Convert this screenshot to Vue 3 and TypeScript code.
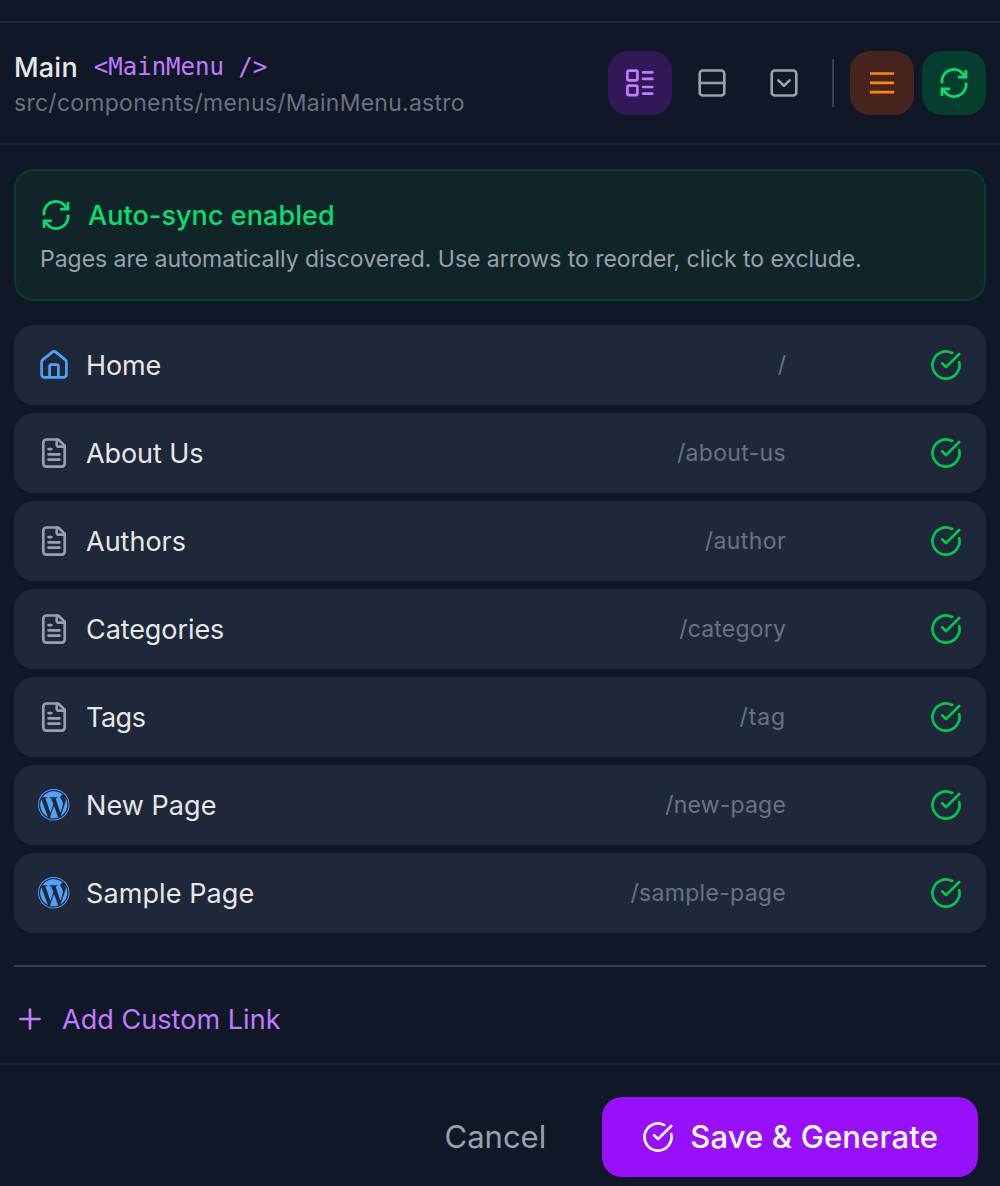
<script setup lang="ts">
import { defineComponent, h } from 'vue'

type IconName = 'grid' | 'rows' | 'dropdown' | 'lines' | 'sync' | 'home' | 'file' | 'wordpress' | 'check' | 'plus'

interface Shape {
  d: string
  fill?: boolean
  cap?: 'round' | 'butt'
}

const box = 'M6.7 3.5h18.6a3 3 0 0 1 3 3v19a3 3 0 0 1-3 3H6.7a3 3 0 0 1-3-3v-19a3 3 0 0 1 3-3z'

const icons: Record<IconName, Shape[]> = {
  grid: [
    { d: 'M4.7 3.6h7.4a1.3 1.3 0 0 1 1.3 1.3v7.2a1.3 1.3 0 0 1-1.3 1.3H4.7a1.3 1.3 0 0 1-1.3-1.3V4.9a1.3 1.3 0 0 1 1.3-1.3z' },
    { d: 'M4.7 18.6h7.4a1.3 1.3 0 0 1 1.3 1.3v6.9a1.3 1.3 0 0 1-1.3 1.3H4.7a1.3 1.3 0 0 1-1.3-1.3v-6.9a1.3 1.3 0 0 1 1.3-1.3z' },
    { d: 'M19 5.3h9.3M19 11.9h9.3M19 20h9.3M19 26.6h9.3' },
  ],
  rows: [{ d: box }, { d: 'M3.7 16h24.6' }],
  dropdown: [{ d: box }, { d: 'M10.4 13.4l5.6 5.3 5.6-5.3' }],
  lines: [{ d: 'M4 6.5h24M4 15.9h24M4 25.2h24', cap: 'butt' }],
  sync: [
    { d: 'M4 16.4A12 12 0 0 1 27.2 10.6M28 15.6A12 12 0 0 1 4.8 21.4', cap: 'butt' },
    { d: 'M28 3v7.2h-8M4 29v-7.2h8', cap: 'butt' },
  ],
  home: [
    { d: 'M3.6 13.4c0-1.2.4-2 1.3-2.8l9.3-7.5c1.1-.9 2.5-.9 3.6 0l9.3 7.5c.9.8 1.3 1.6 1.3 2.8v12a3 3 0 0 1-3 3H6.6a3 3 0 0 1-3-3z' },
    { d: 'M11.6 28V17.7a2 2 0 0 1 2-2h4.8a2 2 0 0 1 2 2V28' },
  ],
  file: [
    { d: 'M8.3 2.5h11.9l6.5 6.3v17.8a3 3 0 0 1-3 3H8.3a3 3 0 0 1-3-3V5.5a3 3 0 0 1 3-3z' },
    { d: 'M18.7 2.8v4.8a2 2 0 0 0 2 2h5.8' },
    { d: 'M10.5 12.1h2.8M10.5 17.3h11M10.5 22.6h11' },
  ],
  wordpress: [
    { d: 'M8.708 61.26c0 20.802 12.089 38.779 29.619 47.298L13.258 39.872a52.354 52.354 0 0 0-4.55 21.388z', fill: true },
    { d: 'M96.74 58.608c0-6.495-2.333-10.993-4.334-14.494-2.664-4.329-5.161-7.995-5.161-12.324 0-4.831 3.664-9.328 8.825-9.328.233 0 .454.029.681.042-9.35-8.566-21.807-13.796-35.489-13.796-18.36 0-34.513 9.42-43.91 23.688 1.233.037 2.395.063 3.382.063 5.497 0 14.006-.667 14.006-.667 2.833-.167 3.167 3.994.337 4.329 0 0-2.847.335-6.015.501L48.2 93.547l11.501-34.493-8.188-22.434c-2.83-.166-5.511-.501-5.511-.501-2.832-.166-2.5-4.496.332-4.329 0 0 8.679.667 13.843.667 5.496 0 14.006-.667 14.006-.667 2.835-.167 3.168 3.994.337 4.329 0 0-2.853.335-6.015.501l18.992 56.494 5.242-17.517c2.272-7.269 4.001-12.49 4.001-16.989z', fill: true },
    { d: 'M62.184 65.857l-15.768 45.819a52.552 52.552 0 0 0 14.846 2.141c6.12 0 11.989-1.058 17.452-2.979a4.451 4.451 0 0 1-.374-.724L62.184 65.857z', fill: true },
    { d: 'M107.376 36.046c.226 1.674.354 3.471.354 5.404 0 5.333-.996 11.328-3.996 18.824l-16.053 46.413c15.624-9.111 26.133-26.038 26.133-45.426.001-9.137-2.333-17.729-6.438-25.215z', fill: true },
    { d: 'M61.262 0C27.483 0 0 27.481 0 61.26c0 33.783 27.483 61.263 61.262 61.263 33.778 0 61.265-27.48 61.265-61.263C122.526 27.481 95.04 0 61.262 0zm0 119c-31.9 0-57.74-25.84-57.74-57.74S29.36 3.52 61.262 3.52 119 29.36 119 61.26 93.16 119 61.262 119z', fill: true },
  ],
  check: [
    { d: 'M22.2 3.98A13.55 13.55 0 1 0 29.25 13.2' },
    { d: 'M12.2 14.3l3.8 3.8L29.2 5' },
  ],
  plus: [{ d: 'M16 6.5v19M6.5 16h19' }],
}

const Icon = defineComponent({
  props: { name: { type: String, required: true } },
  setup(props) {
    return () =>
      h(
        'svg',
        {
          width: 32,
          height: 32,
          viewBox: props.name === 'wordpress' ? '0 0 124.5 124.5' : '0 0 32 32',
          fill: 'none',
          style: { display: 'block', flex: 'none' },
        },
        icons[props.name as IconName].map((s) =>
          h('path', {
            d: s.d,
            fill: s.fill ? 'currentColor' : 'none',
            'fill-rule': 'evenodd',
            stroke: s.fill ? 'none' : 'currentColor',
            'stroke-width': 2.67,
            'stroke-linecap': s.cap ?? 'round',
            'stroke-linejoin': s.cap === 'butt' ? 'miter' : 'round',
          }),
        ),
      )
  },
})

interface Page {
  label: string
  path: string
  icon: IconName
  // letter spacing in pixels for the label and the path
  labelTracking: number
  pathTracking: number
}

const pages: Page[] = [
  { label: 'Home', path: '/', icon: 'home', labelTracking: -0.15, pathTracking: 0 },
  { label: 'About Us', path: '/about-us', icon: 'file', labelTracking: -0.1, pathTracking: 0.33 },
  { label: 'Authors', path: '/author', icon: 'file', labelTracking: 0, pathTracking: 0.4 },
  { label: 'Categories', path: '/category', icon: 'file', labelTracking: -0.08, pathTracking: 0.18 },
  { label: 'Tags', path: '/tag', icon: 'file', labelTracking: -0.5, pathTracking: 0.9 },
  { label: 'New Page', path: '/new-page', icon: 'wordpress', labelTracking: 0.06, pathTracking: 0.2 },
  { label: 'Sample Page', path: '/sample-page', icon: 'wordpress', labelTracking: 0.1, pathTracking: 0.3 },
]
</script>

<template>
  <div class="panel">
    <div class="top"></div>
    <header class="header">
      <div class="heading">
        <div class="title-row">
          <span class="title">Main</span>
          <code class="tag">&lt;MainMenu /&gt;</code>
        </div>
        <div class="file-path">src/components/menus/MainMenu.astro</div>
      </div>
      <div class="tools">
        <button class="tool purple"><Icon name="grid" /></button>
        <button class="tool"><Icon name="rows" /></button>
        <button class="tool"><Icon name="dropdown" /></button>
        <span class="divider"></span>
        <button class="tool orange"><Icon name="lines" /></button>
        <button class="tool green"><Icon name="sync" /></button>
      </div>
    </header>
    <main class="content">
      <section class="notice">
        <div class="notice-title"><Icon name="sync" /><span class="text">Auto-sync enabled</span></div>
        <p>Pages are automatically discovered. Use arrows to reorder, click to exclude.</p>
      </section>
      <ul class="pages">
        <li v-for="page in pages" :key="page.path">
          <Icon :name="page.icon" :class="['kind', page.icon]" />
          <span class="label text" :style="{ letterSpacing: page.labelTracking + 'px' }">{{ page.label }}</span>
          <span class="url" :style="{ letterSpacing: page.pathTracking + 'px' }">{{ page.path }}</span>
          <Icon name="check" class="included" />
        </li>
      </ul>
      <div class="custom">
        <button class="add"><Icon name="plus" /><span class="text">Add Custom Link</span></button>
      </div>
    </main>
    <footer class="footer">
      <button class="cancel">Cancel</button>
      <button class="save"><Icon name="check" /><span>Save &amp; Generate</span></button>
    </footer>
  </div>
</template>

<style>
body {
  background: #101726;
}
</style>

<style scoped>
.panel {
  box-sizing: border-box;
  height: 1186px;
  overflow: hidden;
  background: #101726;
  color: #e5e7eb;
  font-family: Inter, 'Liberation Sans', sans-serif;
  font-size: 27px;
  line-height: 40px;
}
button {
  border: 0;
  padding: 0;
  background: none;
  color: inherit;
  font: inherit;
  letter-spacing: inherit;
}
.text {
  padding-top: 1px;
}
.top {
  height: 21px;
  border-bottom: 2px solid #1e2736;
}
.header {
  display: flex;
  align-items: center;
  justify-content: space-between;
  height: 120px;
  padding: 0 14px;
  border-bottom: 2px solid #1e2736;
}
.title-row {
  display: flex;
  align-items: center;
  gap: 16px;
}
.title {
  padding-top: 1px;
  margin-bottom: -1px;
  font-weight: 500;
  letter-spacing: 0.2px;
}
.tag {
  font-family: 'DejaVu Sans Mono', monospace;
  font-size: 24px;
  line-height: 32px;
  color: #c27aff;
}
.file-path {
  font-size: 23px;
  line-height: 32px;
  letter-spacing: 0.26px;
  color: #6a7282;
}
.tools {
  display: flex;
  align-items: center;
  gap: 8px;
}
.tool {
  display: flex;
  align-items: center;
  justify-content: center;
  width: 64px;
  height: 64px;
  border-radius: 20px;
  color: #99a1af;
}
.purple { background: #311958; color: #c27aff; }
.orange { background: #48241e; color: #ff8904; }
.green { background: #053d2f; color: #05df72; }
.divider {
  width: 2px;
  height: 48px;
  margin: 0 8px;
  background: #364153;
}
.content {
  padding: 24px 14px;
}
.notice {
  box-sizing: border-box;
  height: 132px;
  padding: 24px;
  border: 2px solid #063d2f;
  border-radius: 20px;
  background: #112529;
}
.notice-title {
  display: flex;
  align-items: center;
  gap: 16px;
  height: 40px;
  color: #05df72;
  font-weight: 500;
  letter-spacing: 0.06px;
}
.notice p {
  margin: 8px 0 0;
  font-size: 23px;
  line-height: 32px;
  letter-spacing: -0.02px;
  color: #99a1af;
}
.pages {
  display: flex;
  flex-direction: column;
  gap: 8px;
  margin: 24px 0 0;
  padding: 0;
  list-style: none;
}
.pages li {
  display: flex;
  align-items: center;
  box-sizing: border-box;
  height: 80px;
  padding: 0 24px;
  border-radius: 20px;
  background: #1f2838;
}
.kind { color: #99a1af; }
.home, .wordpress { color: #51a2ff; }
.label {
  flex: 1;
  margin-left: 16px;
}
.url {
  margin-right: 144px;
  font-size: 23px;
  color: #6a7282;
}
.included { color: #00c950; }
.custom {
  margin-top: 32px;
  padding-top: 32px;
  border-top: 2px solid #364153;
}
.add {
  display: flex;
  align-items: center;
  gap: 16px;
  height: 40px;
  color: #c27aff;
  letter-spacing: 0.05px;
}
.footer {
  display: flex;
  align-items: center;
  justify-content: flex-end;
  gap: 56px;
  padding: 32px 22px;
  border-top: 2px solid #1e2736;
  font-size: 31px;
}
.cancel {
  color: #99a1af;
}
.save {
  display: flex;
  align-items: center;
  gap: 16px;
  height: 80px;
  padding: 0 40px;
  border-radius: 20px;
  background: #9810fa;
  color: #fff;
  font-weight: 500;
  letter-spacing: 0.15px;
}
</style>
